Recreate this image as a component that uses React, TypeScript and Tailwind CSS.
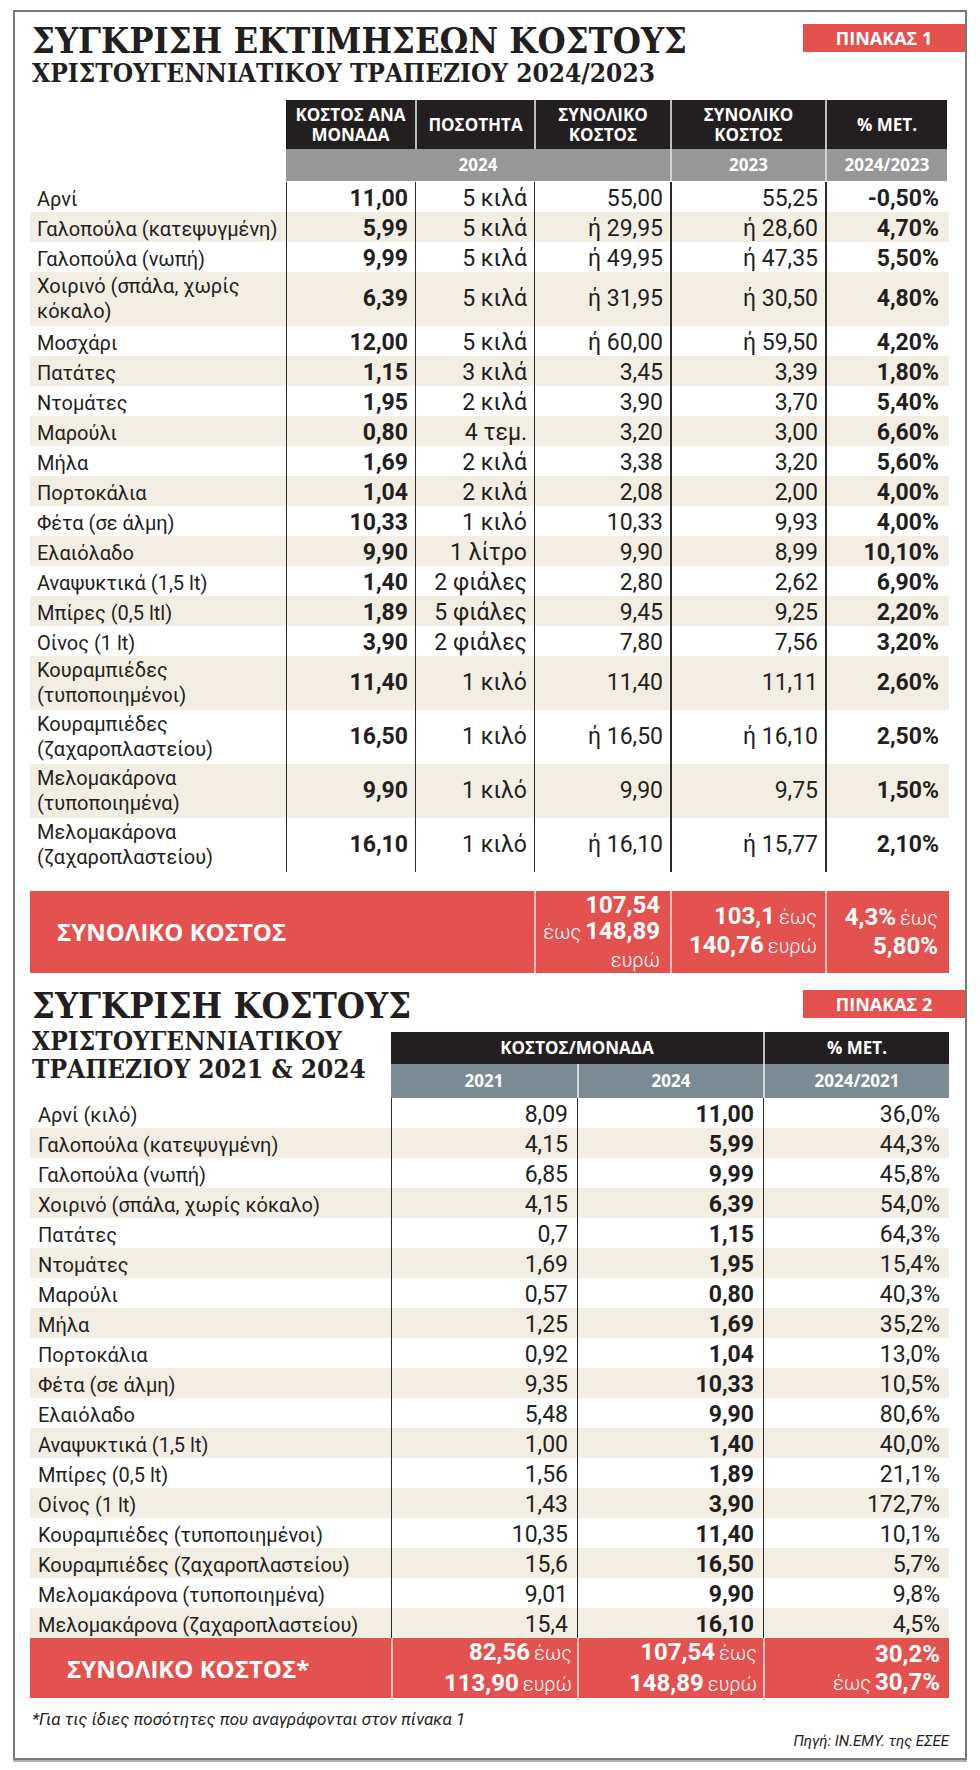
import React from "react";

// --- Daten: Tabelle 1 (2024/2023) ---
type Row1 = {
  label: string;
  unit: string;
  qty: string;
  t24: string;
  t23: string;
  pct: string;
  tall?: boolean;
};

const table1: Row1[] = [
  { label: "Αρνί", unit: "11,00", qty: "5 κιλά", t24: "55,00", t23: "55,25", pct: "-0,50%" },
  { label: "Γαλοπούλα (κατεψυγμένη)", unit: "5,99", qty: "5 κιλά", t24: "ή 29,95", t23: "ή 28,60", pct: "4,70%" },
  { label: "Γαλοπούλα (νωπή)", unit: "9,99", qty: "5 κιλά", t24: "ή 49,95", t23: "ή 47,35", pct: "5,50%" },
  { label: "Χοιρινό (σπάλα, χωρίς\nκόκαλο)", unit: "6,39", qty: "5 κιλά", t24: "ή 31,95", t23: "ή 30,50", pct: "4,80%", tall: true },
  { label: "Μοσχάρι", unit: "12,00", qty: "5 κιλά", t24: "ή 60,00", t23: "ή 59,50", pct: "4,20%" },
  { label: "Πατάτες", unit: "1,15", qty: "3 κιλά", t24: "3,45", t23: "3,39", pct: "1,80%" },
  { label: "Ντομάτες", unit: "1,95", qty: "2 κιλά", t24: "3,90", t23: "3,70", pct: "5,40%" },
  { label: "Μαρούλι", unit: "0,80", qty: "4 τεμ.", t24: "3,20", t23: "3,00", pct: "6,60%" },
  { label: "Μήλα", unit: "1,69", qty: "2 κιλά", t24: "3,38", t23: "3,20", pct: "5,60%" },
  { label: "Πορτοκάλια", unit: "1,04", qty: "2 κιλά", t24: "2,08", t23: "2,00", pct: "4,00%" },
  { label: "Φέτα (σε άλμη)", unit: "10,33", qty: "1 κιλό", t24: "10,33", t23: "9,93", pct: "4,00%" },
  { label: "Ελαιόλαδο", unit: "9,90", qty: "1 λίτρο", t24: "9,90", t23: "8,99", pct: "10,10%" },
  { label: "Αναψυκτικά (1,5 lt)", unit: "1,40", qty: "2 φιάλες", t24: "2,80", t23: "2,62", pct: "6,90%" },
  { label: "Μπίρες (0,5 ltl)", unit: "1,89", qty: "5 φιάλες", t24: "9,45", t23: "9,25", pct: "2,20%" },
  { label: "Οίνος (1 lt)", unit: "3,90", qty: "2 φιάλες", t24: "7,80", t23: "7,56", pct: "3,20%" },
  { label: "Κουραμπιέδες\n(τυποποιημένοι)", unit: "11,40", qty: "1 κιλό", t24: "11,40", t23: "11,11", pct: "2,60%", tall: true },
  { label: "Κουραμπιέδες\n(ζαχαροπλαστείου)", unit: "16,50", qty: "1 κιλό", t24: "ή 16,50", t23: "ή 16,10", pct: "2,50%", tall: true },
  { label: "Μελομακάρονα\n(τυποποιημένα)", unit: "9,90", qty: "1 κιλό", t24: "9,90", t23: "9,75", pct: "1,50%", tall: true },
  { label: "Μελομακάρονα\n(ζαχαροπλαστείου)", unit: "16,10", qty: "1 κιλό", t24: "ή 16,10", t23: "ή 15,77", pct: "2,10%", tall: true },
];

// --- Daten: Tabelle 2 (2021 & 2024) ---
const table2: [string, string, string, string][] = [
  ["Αρνί (κιλό)", "8,09", "11,00", "36,0%"],
  ["Γαλοπούλα (κατεψυγμένη)", "4,15", "5,99", "44,3%"],
  ["Γαλοπούλα (νωπή)", "6,85", "9,99", "45,8%"],
  ["Χοιρινό (σπάλα, χωρίς κόκαλο)", "4,15", "6,39", "54,0%"],
  ["Πατάτες", "0,7", "1,15", "64,3%"],
  ["Ντομάτες", "1,69", "1,95", "15,4%"],
  ["Μαρούλι", "0,57", "0,80", "40,3%"],
  ["Μήλα", "1,25", "1,69", "35,2%"],
  ["Πορτοκάλια", "0,92", "1,04", "13,0%"],
  ["Φέτα (σε άλμη)", "9,35", "10,33", "10,5%"],
  ["Ελαιόλαδο", "5,48", "9,90", "80,6%"],
  ["Αναψυκτικά (1,5 lt)", "1,00", "1,40", "40,0%"],
  ["Μπίρες (0,5 lt)", "1,56", "1,89", "21,1%"],
  ["Οίνος (1 lt)", "1,43", "3,90", "172,7%"],
  ["Κουραμπιέδες (τυποποιημένοι)", "10,35", "11,40", "10,1%"],
  ["Κουραμπιέδες (ζαχαροπλαστείου)", "15,6", "16,50", "5,7%"],
  ["Μελομακάρονα (τυποποιημένα)", "9,01", "9,90", "9,8%"],
  ["Μελομακάρονα (ζαχαροπλαστείου)", "15,4", "16,10", "4,5%"],
];

const T1_COLS = "grid grid-cols-[256px_129px_119px_136px_155px_122px]";
const T2_COLS = "grid grid-cols-[361px_186px_186px_186px]";
const SERIF = "font-['DejaVu_Serif_Condensed','DejaVu_Serif',serif] font-bold text-[#231f20]";
const HEAD = "font-['Open_Sans',sans-serif] font-bold text-white";
const BEIGE = "bg-[#f3eee4]";
const RED = "bg-[#e3524f]";

// Zahlenzelle, rechtsbündig mit Trennlinie links
const Cell: React.FC<{ bold?: boolean; thick?: boolean; children: React.ReactNode }> = ({ bold, thick, children }) => (
  <div
    className={`flex items-center justify-end pr-[7px] text-[23px] whitespace-nowrap border-[#2b2b2b] ${thick ? "border-l-2" : "border-l"} ${bold ? "font-bold" : "font-normal"}`}
  >
    {children}
  </div>
);

const Badge: React.FC<{ children: React.ReactNode; top: string }> = ({ children, top }) => (
  <div className={`${RED} ${top} -mr-[16px] w-[162px] h-[28px] flex items-center justify-center ${HEAD} text-[18px]`}>
    {children}
  </div>
);

const Light: React.FC<{ children: React.ReactNode }> = ({ children }) => (
  <span className="font-light text-[20px]">{children}</span>
);
const Big: React.FC<{ children: React.ReactNode }> = ({ children }) => (
  <span className="font-bold text-[24px]">{children}</span>
);

const App: React.FC = () => {
  return (
    <div className="w-[980px] h-[1770px] bg-white pt-[10px] pl-[13px] font-['Roboto',sans-serif] text-[#231f20]">
      <div className="w-[954px] h-[1750px] border-2 border-[#7a7a7a] pl-[15px] pr-[16px] shadow-[0_2px_0_#b0b0b0]">
        {/* --- Titel Tabelle 1 --- */}
        <div className="flex justify-between items-start pt-[10px]">
          <div className="ml-[2px]">
            <h1 className={`${SERIF} text-[36px] leading-[36px]`}>ΣΥΓΚΡΙΣΗ ΕΚΤΙΜΗΣΕΩΝ ΚΟΣΤΟΥΣ</h1>
            <h2 className={`${SERIF} text-[26px] leading-[30px]`}>ΧΡΙΣΤΟΥΓΕΝΝΙΑΤΙΚΟΥ ΤΡΑΠΕΖΙΟΥ 2024/2023</h2>
          </div>
          <Badge top="mt-[2px]">ΠΙΝΑΚΑΣ 1</Badge>
        </div>

        {/* --- Tabelle 1 Kopf --- */}
        <div className={`${T1_COLS} grid-rows-[49px_32px] mt-[12px] ${HEAD} text-[17px] leading-[20px] text-center`}>
          <div className="row-span-2" />
          <div className="bg-[#231f20] flex items-center justify-center">ΚΟΣΤΟΣ ΑΝΑ<br />ΜΟΝΑΔΑ</div>
          <div className="bg-[#231f20] flex items-center justify-center border-l-2 border-[#bdbdbd]">ΠΟΣΟΤΗΤΑ</div>
          <div className="bg-[#231f20] flex items-center justify-center border-l-2 border-[#bdbdbd]">ΣΥΝΟΛΙΚΟ<br />ΚΟΣΤΟΣ</div>
          <div className="bg-[#231f20] flex items-center justify-center border-l-2 border-[#bdbdbd]">ΣΥΝΟΛΙΚΟ<br />ΚΟΣΤΟΣ</div>
          <div className="bg-[#231f20] flex items-center justify-center border-l-2 border-[#bdbdbd]">% ΜΕΤ.</div>
          <div className="col-span-3 bg-[#979797] flex items-center justify-center">2024</div>
          <div className="bg-[#979797] flex items-center justify-center border-l-2 border-[#d4d4d4]">2023</div>
          <div className="bg-[#979797] flex items-center justify-center border-l-2 border-[#d4d4d4]">2024/2023</div>
        </div>

        {/* --- Tabelle 1 Zeilen --- */}
        <div className="mt-[1px]">
          {table1.map((r, i) => (
            <div key={i} className={`${T1_COLS} ${i % 2 === 1 ? BEIGE : "bg-white"} ${r.tall ? "h-[54px]" : "h-[30px]"}`}>
              <div className="flex items-center pl-[7px] text-[20px] leading-[25px] whitespace-pre">{r.label}</div>
              <Cell bold>{r.unit}</Cell>
              <Cell>{r.qty}</Cell>
              <Cell>{r.t24}</Cell>
              <Cell thick>{r.t23}</Cell>
              <Cell thick bold>
                <span className="pr-[1px]">{r.pct}</span>
              </Cell>
            </div>
          ))}
        </div>

        {/* --- Tabelle 1 Summe --- */}
        <div className={`grid grid-cols-[504px_136px_155px_122px] h-[82px] ${RED} text-white mt-[19px]`}>
          <div className={`flex items-center pl-[27px] ${HEAD} text-[24px]`}>ΣΥΝΟΛΙΚΟ ΚΟΣΤΟΣ</div>
          <div className="flex flex-col justify-center items-end pr-[10px] border-l-2 border-[#f1c0bd] leading-[26px]">
            <Big>107,54</Big>
            <span><Light>έως</Light> <Big>148,89</Big></span>
            <Light>ευρώ</Light>
          </div>
          <div className="flex flex-col justify-center items-end pr-[8px] border-l-2 border-[#f1c0bd] leading-[27px]">
            <span><Big>103,1</Big> <Light>έως</Light></span>
            <span><Big>140,76</Big> <Light>ευρώ</Light></span>
          </div>
          <div className="flex flex-col justify-center items-end pr-[9px] border-l-2 border-[#f1c0bd] leading-[27px]">
            <span><Big>4,3%</Big> <Light>έως</Light></span>
            <Big>5,80%</Big>
          </div>
        </div>

        {/* --- Titel Tabelle 2 --- */}
        <div className="flex justify-between items-start mt-[14px]">
          <h1 className={`${SERIF} ml-[2px] text-[36px] leading-[36px]`}>ΣΥΓΚΡΙΣΗ ΚΟΣΤΟΥΣ</h1>
          <Badge top="mt-[3px]">ΠΙΝΑΚΑΣ 2</Badge>
        </div>

        {/* --- Tabelle 2 Kopf --- */}
        <div className={`${T2_COLS} grid-rows-[32px_34px] mt-[9px] ${HEAD} text-[17px] text-center`}>
          <div className="row-span-2">
            <h2 className={`${SERIF} -mt-[5px] ml-[2px] text-left text-[26px] leading-[28px]`}>
              ΧΡΙΣΤΟΥΓΕΝΝΙΑΤΙΚΟΥ
              <br />
              ΤΡΑΠΕΖΙΟΥ 2021 &amp; 2024
            </h2>
          </div>
          <div className="col-span-2 bg-[#231f20] flex items-center justify-center">ΚΟΣΤΟΣ/ΜΟΝΑΔΑ</div>
          <div className="bg-[#231f20] flex items-center justify-center border-l-2 border-[#bdbdbd]">% ΜΕΤ.</div>
          <div className="bg-[#7c8a93] flex items-center justify-center">2021</div>
          <div className="bg-[#7c8a93] flex items-center justify-center border-l-2 border-[#cfd5d9]">2024</div>
          <div className="bg-[#7c8a93] flex items-center justify-center border-l-2 border-[#cfd5d9]">2024/2021</div>
        </div>

        {/* --- Tabelle 2 Zeilen --- */}
        <div>
          {table2.map(([label, a, b, c], i) => (
            <div key={i} className={`${T2_COLS} h-[30px] ${i % 2 === 1 ? BEIGE : "bg-white"}`}>
              <div className="flex items-center pl-[8px] text-[20px] whitespace-nowrap">{label}</div>
              <div className="flex items-center justify-end pr-[9px] text-[23px] border-l border-[#2b2b2b]">{a}</div>
              <div className="flex items-center justify-end pr-[9px] text-[23px] font-bold border-l border-[#2b2b2b]">{b}</div>
              <div className="flex items-center justify-end pr-[9px] text-[23px] border-l border-[#2b2b2b]">{c}</div>
            </div>
          ))}
        </div>

        {/* --- Tabelle 2 Summe --- */}
        <div className={`${T2_COLS} h-[60px] ${RED} text-white leading-[28px]`}>
          <div className={`flex items-center pl-[37px] ${HEAD} text-[24px]`}>ΣΥΝΟΛΙΚΟ ΚΟΣΤΟΣ*</div>
          <div className="flex flex-col justify-center items-end pr-[5px] border-l-2 border-[#f1c0bd]">
            <span><Big>82,56</Big> <Light>έως</Light></span>
            <span><Big>113,90</Big> <Light>ευρώ</Light></span>
          </div>
          <div className="flex flex-col justify-center items-end pr-[6px] border-l-2 border-[#f1c0bd]">
            <span><Big>107,54</Big> <Light>έως</Light></span>
            <span><Big>148,89</Big> <Light>ευρώ</Light></span>
          </div>
          <div className="flex flex-col justify-center items-end pr-[9px] border-l-2 border-[#f1c0bd]">
            <Big>30,2%</Big>
            <span><Light>έως</Light> <Big>30,7%</Big></span>
          </div>
        </div>

        {/* --- Fußnote und Quelle --- */}
        <p className="mt-[11px] ml-[2px] italic text-[17px] leading-[20px]">
          *Για τις ίδιες ποσότητες που αναγράφονται στον πίνακα 1
        </p>
        <p className="mt-[2px] text-right italic text-[15px] leading-[20px]">Πηγή: IN.EMY. της ΕΣΕΕ</p>
      </div>
    </div>
  );
};

export default App;
